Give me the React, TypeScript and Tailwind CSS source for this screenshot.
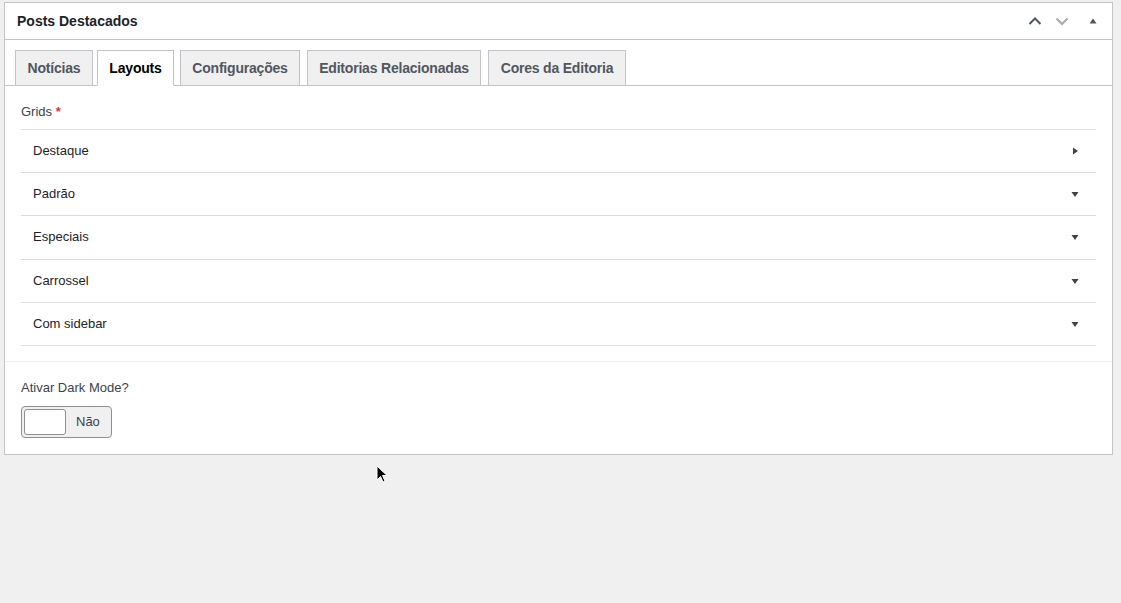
import React from 'react';

const tabs = [
  { label: 'Notícias', w: 'w-[78px]' },
  { label: 'Layouts', w: 'w-[77px] ml-[4px]' },
  { label: 'Configurações', w: 'w-[120px] ml-[6px]' },
  { label: 'Editorias Relacionadas', w: 'w-[174px] ml-[7px]' },
  { label: 'Cores da Editoria', w: 'w-[138px] ml-[7px]' },
];
const grids = ['Destaque', 'Padrão', 'Especiais', 'Carrossel', 'Com sidebar'];

const Caret: React.FC<{ dir: 'right' | 'down' }> = ({ dir }) => (
  <svg width="10" height="10" viewBox="0 0 10 10" className="fill-[#3c434a]">
    {dir === 'right' ? <polygon points="3,1.5 8,5 3,8.5" /> : <polygon points="1.5,3 8.5,3 5,8" />}
  </svg>
);

const App: React.FC = () => {
  return (
    <div className="relative min-h-[603px] bg-[#f0f0f1] pt-[2px] pl-[4px] pr-[8px] font-['Liberation_Sans',sans-serif] text-[#1d2327]">
      <div className="border border-[#c3c4c7] bg-white">
        {/* header */}
        <div className="flex h-[37px] items-center justify-between border-b border-[#c3c4c7] pl-[12px] pr-[14px]">
          <h2 className="text-[14px] font-bold text-[#1d2327]">Posts Destacados</h2>
          <div className="flex items-center">
            <svg width="16" height="16" viewBox="0 0 16 16" className="mr-[11px]">
              <path d="M2.5 11 L8 5.5 L13.5 11" fill="none" stroke="#50575e" strokeWidth="2" />
            </svg>
            <svg width="16" height="16" viewBox="0 0 16 16" className="mr-[18px]">
              <path d="M2.5 5.5 L8 11 L13.5 5.5" fill="none" stroke="#a7aaad" strokeWidth="2" />
            </svg>
            <svg width="10" height="10" viewBox="0 0 10 10">
              <polygon points="1.5,7.5 8.5,7.5 5,2.5" fill="#50575e" />
            </svg>
          </div>
        </div>

        {/* tabs */}
        <div className="flex items-end border-b border-[#c3c4c7] pl-[10px] pt-[10px]">
          {tabs.map((t) =>
            t.label === 'Layouts' ? (
              <div
                key={t.label}
                className={`-mb-px flex h-[36px] ${t.w} items-center justify-center border border-b-white border-[#c3c4c7] bg-white text-[14px] font-bold tracking-[-0.2px] text-black`}
              >
                {t.label}
              </div>
            ) : (
              <div
                key={t.label}
                className={`flex h-[35px] ${t.w} items-center justify-center border border-b-0 border-[#c3c4c7] bg-[#f0f0f1] text-[14px] font-bold tracking-[-0.2px] text-[#50575e]`}
              >
                {t.label}
              </div>
            )
          )}
        </div>

        {/* grids */}
        <div className="px-[16px] pt-[16px] pb-[15px]">
          <div className="mb-[7px] text-[13px] text-[#3c434a]">
            Grids <span className="font-bold text-[#d63638]">*</span>
          </div>
          <div className="border-t border-[#dcdcde]">
            {grids.map((g, i) => (
              <div
                key={g}
                className={`flex ${i === 2 ? 'h-[44px]' : 'h-[43px]'} items-center justify-between border-b border-[#dcdcde] pl-[12px] pr-[16px]`}
              >
                <span className="text-[13px] text-[#1d2327]">{g}</span>
                <Caret dir={i === 0 ? 'right' : 'down'} />
              </div>
            ))}
          </div>
        </div>

        {/* dark mode */}
        <div className="border-t border-[#f0f0f1] px-[16px] pt-[16px] pb-[16px]">
          <div className="mb-[9px] text-[13px] text-[#3c434a]">Ativar Dark Mode?</div>
          <div className="flex h-[32px] w-[91px] items-center rounded-[4px] border border-[#8c8f94] bg-[#f0f0f1] p-[2px]">
            <div className="h-[26px] w-[42px] rounded-[3px] border border-[#8c8f94] bg-white" />
            <span className="ml-[10px] text-[13px] text-[#3c434a]">Não</span>
          </div>
        </div>
      </div>

      {/* mouse cursor */}
      <svg width="14" height="20" viewBox="0 0 14 20" className="absolute left-[376px] top-[465px]">
        <path d="M1 1 L1 15 L4.5 11.5 L7 17 L9 16 L6.5 10.5 L11 10.5 Z" fill="#000" stroke="#fff" strokeWidth="1" />
      </svg>
    </div>
  );
};

export default App;
